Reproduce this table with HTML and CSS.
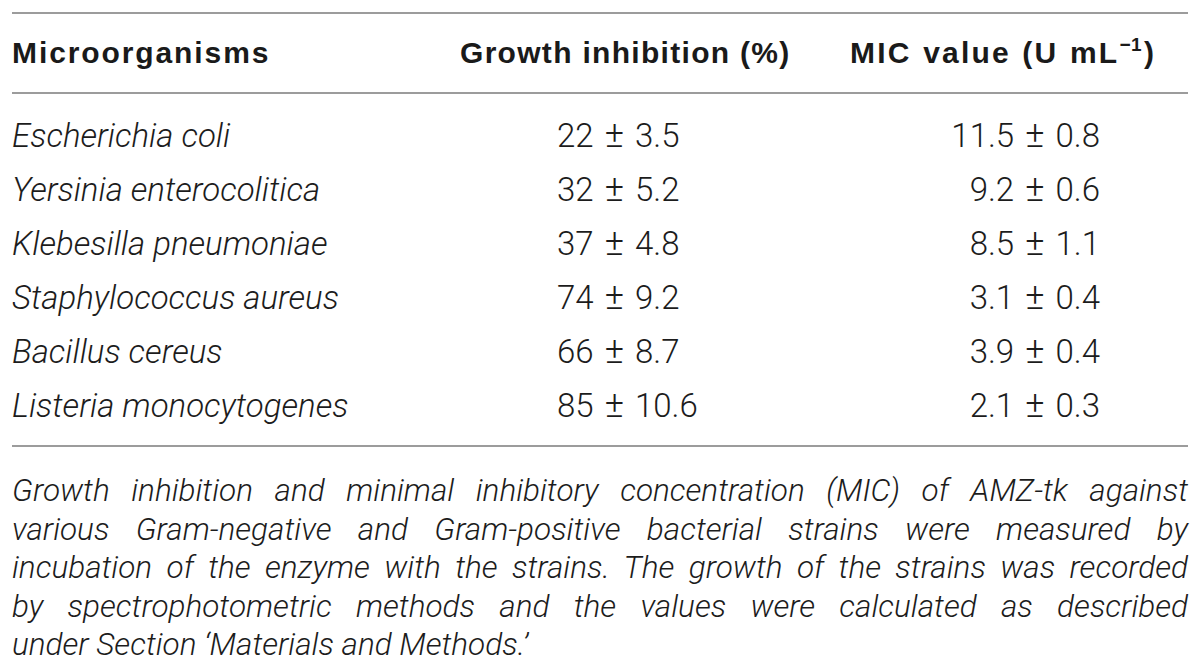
FILE: index.html
```html
<!DOCTYPE html>
<html lang="en">
<head>
<meta charset="utf-8">
<title>Antimicrobial activity of AMZ-tk</title>
<link rel="stylesheet" href="styles.css">
</head>
<body>
<div class="page">
  <table class="data">
    <colgroup>
      <col class="c1">
      <col class="c2">
      <col class="c3">
    </colgroup>
    <thead>
      <tr>
        <th class="h1">Microorganisms</th>
        <th class="h2">Growth inhibition (%)</th>
        <th class="h3">MIC value (U mL<sup class="sup">−1</sup>)</th>
      </tr>
    </thead>
    <tbody>
      <tr>
        <td class="org">Escherichia coli</td>
        <td class="gi">22 <span class="pm">±</span> 3.5</td>
        <td class="mic">11.5 <span class="pm">±</span> 0.8</td>
      </tr>
      <tr>
        <td class="org">Yersinia enterocolitica</td>
        <td class="gi">32 <span class="pm">±</span> 5.2</td>
        <td class="mic">9.2 <span class="pm">±</span> 0.6</td>
      </tr>
      <tr>
        <td class="org">Klebesilla pneumoniae</td>
        <td class="gi">37 <span class="pm">±</span> 4.8</td>
        <td class="mic">8.5 <span class="pm">±</span> 1.1</td>
      </tr>
      <tr>
        <td class="org">Staphylococcus aureus</td>
        <td class="gi">74 <span class="pm">±</span> 9.2</td>
        <td class="mic">3.1 <span class="pm">±</span> 0.4</td>
      </tr>
      <tr>
        <td class="org">Bacillus cereus</td>
        <td class="gi">66 <span class="pm">±</span> 8.7</td>
        <td class="mic">3.9 <span class="pm">±</span> 0.4</td>
      </tr>
      <tr>
        <td class="org">Listeria monocytogenes</td>
        <td class="gi">85 <span class="pm">±</span> 10.6</td>
        <td class="mic">2.1 <span class="pm">±</span> 0.3</td>
      </tr>
    </tbody>
  </table>
  <p class="caption">
    <span class="line">Growth inhibition and minimal inhibitory concentration (MIC) of AMZ-tk against</span>
    <span class="line">various Gram-negative and Gram-positive bacterial strains were measured by</span>
    <span class="line">incubation of the enzyme with the strains. The growth of the strains was recorded</span>
    <span class="line">by spectrophotometric methods and the values were calculated as described</span>
    <span class="line last">under Section ‘Materials and Methods.’</span>
  </p>
</div>
</body>
</html>
```
FILE: styles.css
```css
html, body {
  margin: 0;
  padding: 0;
  background: #ffffff;
}

body {
  color: #1c1c1c;
  font-family: Roboto, "Liberation Sans", Arial, sans-serif;
  font-weight: 300;
}

.page {
  padding: 12px 12px 0 12px;
  width: 1176px;
}

.data {
  width: 1176px;
  border-collapse: collapse;
  table-layout: fixed;
  border-top: 2px solid #9c9c9c;
  border-bottom: 2px solid #9c9c9c;
}

.c1 { width: 448px; }
.c2 { width: 390px; }
.c3 { width: 338px; }

.data thead tr {
  border-bottom: 2px solid #9c9c9c;
}

.data th {
  font-family: "Liberation Sans", Arial, sans-serif;
  font-weight: 700;
  font-size: 30px;
  letter-spacing: 1.3px;
  line-height: 78px;
  height: 78px;
  padding: 0;
  text-align: left;
  white-space: nowrap;
  color: #1a1a1a;
}

.data th.h1 {
  letter-spacing: 1.9px;
}

.data th.h3 {
  letter-spacing: 2.2px;
  word-spacing: 1px;
}

.sup {
  font-size: 19px;
  line-height: 0;
  vertical-align: 12px;
  letter-spacing: 0.5px;
  margin-right: 2px;
}

.data td {
  font-size: 33px;
  line-height: 54px;
  padding: 0;
  white-space: nowrap;
}

.data tbody tr:first-child td {
  padding-top: 15px;
}

.data tbody tr:last-child td {
  padding-bottom: 12px;
}

.org {
  font-style: italic;
}

.gi {
  padding-left: 97px !important;
}

.mic {
  text-align: right;
  padding-right: 88px !important;
}

.pm {
  display: inline-block;
  font-size: 1.1em;
  line-height: 1;
  margin: 0 3px;
}

.caption {
  margin: 25px 0 0 0;
  font-size: 31.5px;
  line-height: 38.5px;
  font-style: italic;
}

.line {
  display: block;
  text-align: justify;
  text-align-last: justify;
  white-space: nowrap;
}

.line.last {
  text-align: left;
  text-align-last: left;
}
```
